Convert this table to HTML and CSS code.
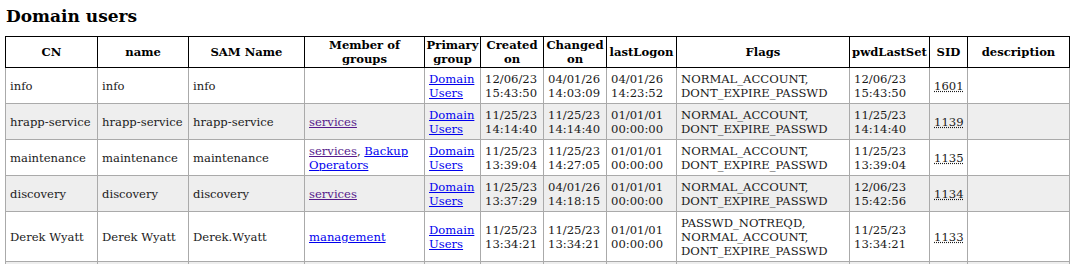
FILE: index.html
```html
<!DOCTYPE html>
<html>
<head>
<meta charset="utf-8">
<title>Domain users</title>
<link rel="stylesheet" href="styles.css">
</head>
<body>
<h2 class="title">Domain users</h2>
<table class="grid">
<colgroup>
<col class="c-cn"><col class="c-name"><col class="c-sam"><col class="c-member"><col class="c-primary"><col class="c-created"><col class="c-changed"><col class="c-logon"><col class="c-flags"><col class="c-pwd"><col class="c-sid"><col class="c-desc">
</colgroup>
<thead>
<tr><th>CN</th><th>name</th><th>SAM Name</th><th>Member of groups</th><th>Primary group</th><th>Created on</th><th>Changed on</th><th>lastLogon</th><th>Flags</th><th>pwdLastSet</th><th>SID</th><th>description</th></tr>
</thead>
<tbody>
<tr><td>info</td><td>info</td><td>info</td><td></td><td><a class="lnk" href="#">Domain Users</a></td><td>12/06/23 15:43:50</td><td>04/01/26 14:03:09</td><td>04/01/26 14:23:52</td><td>NORMAL_ACCOUNT, DONT_EXPIRE_PASSWD</td><td>12/06/23 15:43:50</td><td><abbr class="sid" title="S-1-5-21-1601">1601</abbr></td><td></td></tr>
<tr><td>hrapp-service</td><td>hrapp-service</td><td>hrapp-service</td><td><a class="lnk visited" href="#">services</a></td><td><a class="lnk" href="#">Domain Users</a></td><td>11/25/23 14:14:40</td><td>11/25/23 14:14:40</td><td>01/01/01 00:00:00</td><td>NORMAL_ACCOUNT, DONT_EXPIRE_PASSWD</td><td>11/25/23 14:14:40</td><td><abbr class="sid" title="S-1-5-21-1139">1139</abbr></td><td></td></tr>
<tr><td>maintenance</td><td>maintenance</td><td>maintenance</td><td><a class="lnk visited" href="#">services</a>, <a class="lnk" href="#">Backup Operators</a></td><td><a class="lnk" href="#">Domain Users</a></td><td>11/25/23 13:39:04</td><td>11/25/23 14:27:05</td><td>01/01/01 00:00:00</td><td>NORMAL_ACCOUNT, DONT_EXPIRE_PASSWD</td><td>11/25/23 13:39:04</td><td><abbr class="sid" title="S-1-5-21-1135">1135</abbr></td><td></td></tr>
<tr><td>discovery</td><td>discovery</td><td>discovery</td><td><a class="lnk visited" href="#">services</a></td><td><a class="lnk" href="#">Domain Users</a></td><td>11/25/23 13:37:29</td><td>04/01/26 14:18:15</td><td>01/01/01 00:00:00</td><td>NORMAL_ACCOUNT, DONT_EXPIRE_PASSWD</td><td>12/06/23 15:42:56</td><td><abbr class="sid" title="S-1-5-21-1134">1134</abbr></td><td></td></tr>
<tr><td>Derek Wyatt</td><td>Derek Wyatt</td><td>Derek.Wyatt</td><td><a class="lnk" href="#">management</a></td><td><a class="lnk" href="#">Domain Users</a></td><td>11/25/23 13:34:21</td><td>11/25/23 13:34:21</td><td>01/01/01 00:00:00</td><td>PASSWD_NOTREQD, NORMAL_ACCOUNT, DONT_EXPIRE_PASSWD</td><td>11/25/23 13:34:21</td><td><abbr class="sid" title="S-1-5-21-1133">1133</abbr></td><td></td></tr>
<tr><td>Guest</td><td>Guest</td><td>Guest</td><td><a class="lnk" href="#">Guests</a></td><td><a class="lnk" href="#">Domain Guests</a></td><td>11/25/23 13:10:02</td><td>11/25/23 13:10:02</td><td>01/01/01 00:00:00</td><td>PASSWD_NOTREQD, NORMAL_ACCOUNT</td><td>01/01/01 00:00:00</td><td><abbr class="sid" title="S-1-5-21-501">501</abbr></td><td>Built-in account</td></tr>
</tbody>
</table>
</body>
</html>
```
FILE: styles.css
```css
html, body {
  background: #fff;
}
body {
  margin: 0 0 0 5px;
  padding: 0;
  font-family: "DejaVu Serif", serif;
  font-size: 11.6px;
  line-height: 14px;
  color: #1a1a1a;
}
.title {
  font-size: 17px;
  line-height: 20px;
  font-weight: bold;
  margin: 0;
  padding: 6px 0 0 1px;
  height: 36px;
  box-sizing: border-box;
  color: #000;
}
.grid {
  border-collapse: collapse;
  table-layout: fixed;
  width: 1065px;
}
.grid th {
  border: 1px solid #000;
  padding: 1px 1px;
  font-weight: bold;
  text-align: center;
  vertical-align: middle;
  color: #000;
}
.grid td {
  border: 1px solid #aaa;
  padding: 4px 4px 3px 4px;
  vertical-align: middle;
  text-align: left;
}
.grid tbody tr:nth-child(even) td {
  background: #eee;
}
.lnk { color: #0000ee; }
.lnk.visited { color: #551a8b; }
.sid {
  text-decoration: underline dotted;
}
.c-cn { width: 92px; }
.c-name { width: 91px; }
.c-sam { width: 116px; }
.c-member { width: 120px; }
.c-primary { width: 56px; }
.c-created { width: 63px; }
.c-changed { width: 63px; }
.c-logon { width: 70px; }
.c-flags { width: 173px; }
.c-pwd { width: 80px; }
.c-sid { width: 38px; }
.c-desc { width: 102px; }
```
